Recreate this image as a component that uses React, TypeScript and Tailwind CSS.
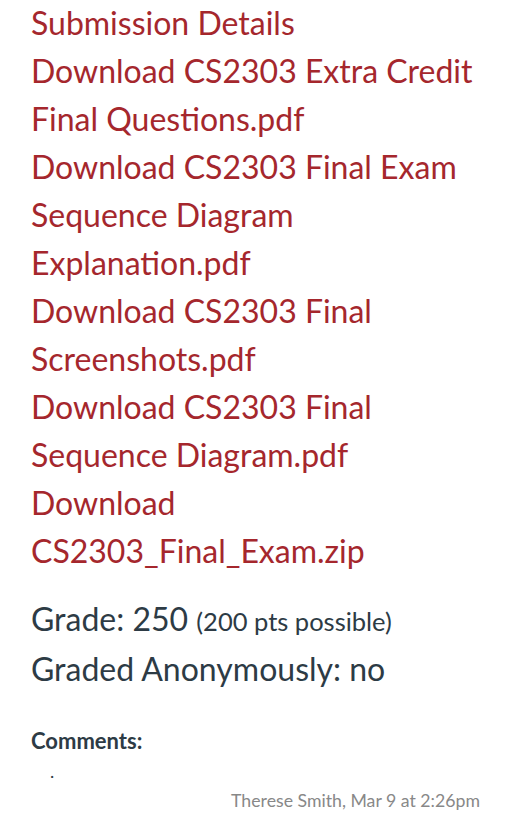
import React from "react";

const links = [
  "Submission Details",
  "Download CS2303 Extra Credit Final Questions.pdf",
  "Download CS2303 Final Exam Sequence Diagram Explanation.pdf",
  "Download CS2303 Final Screenshots.pdf",
  "Download CS2303 Final Sequence Diagram.pdf",
  "Download CS2303_Final_Exam.zip",
];

export default function App() {
  return (
    <div
      className="min-h-[824px] w-[516px] bg-white pl-[31px] pr-[36px]"
      style={{ fontFamily: "Lato, 'Noto Sans', sans-serif" }}
    >
      <div className="-mt-[1px] flex flex-col">
        {links.map((l) => (
          <a
            key={l}
            href="#"
            className="block text-[32px] leading-[48px] text-[#a5272d]"
          >
            {l}
          </a>
        ))}
      </div>
      <div className="mt-[20px] text-[32px] leading-[48px] text-[#2d3b45]">
        <div>
          Grade: 250 <span className="text-[25.5px]">(200 pts possible)</span>
        </div>
        <div>Graded Anonymously: no</div>
      </div>
      <div className="mt-[34px] text-[22px] font-bold leading-[28px] text-[#2d3b45]">
        Comments:
      </div>
      <div className="mt-[4px] pl-[19px] text-[18px] leading-[24px] text-[#2d3b45]">.</div>
      <div className="mt-[6px] text-right text-[17.7px] leading-[24px] text-[#888888]">
        Therese Smith, Mar 9 at 2:26pm
      </div>
    </div>
  );
}
